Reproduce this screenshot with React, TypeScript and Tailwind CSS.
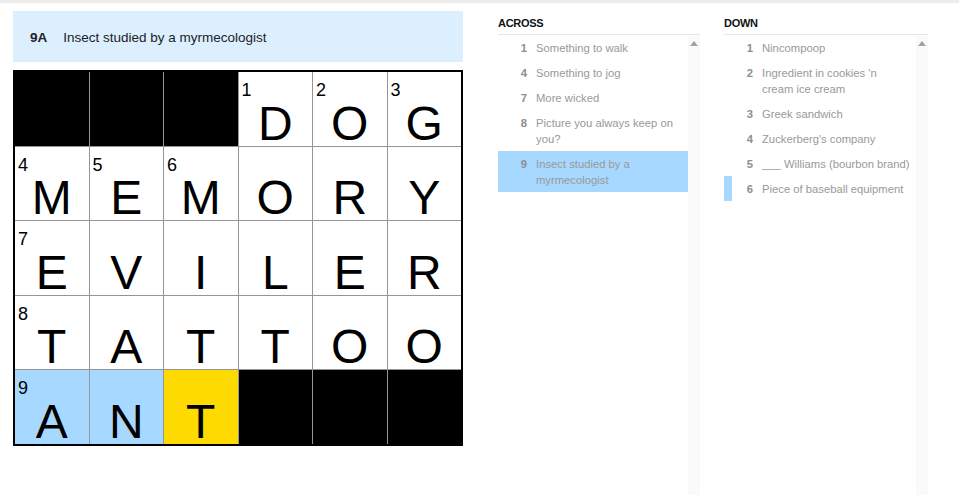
import React from "react";

type Cell = { num?: number; letter?: string; black?: boolean; bg?: string };

const B: Cell = { black: true };
const rows: Cell[][] = [
  [B, B, B, { num: 1, letter: "D" }, { num: 2, letter: "O" }, { num: 3, letter: "G" }],
  [{ num: 4, letter: "M" }, { num: 5, letter: "E" }, { num: 6, letter: "M" }, { letter: "O" }, { letter: "R" }, { letter: "Y" }],
  [{ num: 7, letter: "E" }, { letter: "V" }, { letter: "I" }, { letter: "L" }, { letter: "E" }, { letter: "R" }],
  [{ num: 8, letter: "T" }, { letter: "A" }, { letter: "T" }, { letter: "T" }, { letter: "O" }, { letter: "O" }],
  [
    { num: 9, letter: "A", bg: "blue" },
    { letter: "N", bg: "blue" },
    { letter: "T", bg: "yellow" },
    B,
    B,
    B,
  ],
];

type Clue = { n: number; lines: string[]; active?: boolean; related?: boolean };

const across: Clue[] = [
  { n: 1, lines: ["Something to walk"] },
  { n: 4, lines: ["Something to jog"] },
  { n: 7, lines: ["More wicked"] },
  { n: 8, lines: ["Picture you always keep on", "you?"] },
  { n: 9, lines: ["Insect studied by a", "myrmecologist"], active: true },
];

const down: Clue[] = [
  { n: 1, lines: ["Nincompoop"] },
  { n: 2, lines: ["Ingredient in cookies 'n", "cream ice cream"] },
  { n: 3, lines: ["Greek sandwich"] },
  { n: 4, lines: ["Zuckerberg's company"] },
  { n: 5, lines: ["___ Williams (bourbon brand)"] },
  { n: 6, lines: ["Piece of baseball equipment"], related: true },
];

function GridCell({ c }: { c: Cell }) {
  if (c.black) return <div className="bg-black" />;
  const bg =
    c.bg === "blue" ? "bg-[#a7d8ff]" : c.bg === "yellow" ? "bg-[#ffda00]" : "bg-white";
  return (
    <div className={`relative flex items-end justify-center ${bg}`}>
      {c.num !== undefined && (
        <span className="absolute left-[3px] top-[9px] text-[18px] leading-none text-black">
          {c.num}
        </span>
      )}
      <span className="mb-[-2px] text-[48px] leading-none text-black">{c.letter}</span>
    </div>
  );
}

function ClueList({ title, clues, width }: { title: string; clues: Clue[]; width: string }) {
  return (
    <div className={`flex flex-col ${width}`}>
      <div className="border-b border-[#e6e6e6] pt-[4px] pb-[3px] text-[11px] font-bold leading-[16px] tracking-[-0.3px] text-[#121212]">
        {title}
      </div>
      <div className="flex flex-1">
        <div className="flex flex-1 flex-col">
          {clues.map((c) => (
            <div
              key={c.n}
              className={`flex border-l-[8px] py-[4.5px] leading-[16px] text-[11.25px] ${
                c.active ? "border-[#a7d8ff] bg-[#a7d8ff]" : c.related ? "border-[#a7d8ff]" : "border-transparent"
              }`}
            >
              <span className="w-[21px] shrink-0 text-right font-bold text-[#8e8e8e]">{c.n}</span>
              <span className="ml-[9px] flex flex-col whitespace-nowrap text-[#999999]">
                {c.lines.map((l, i) => (
                  <span key={i}>{l}</span>
                ))}
              </span>
            </div>
          ))}
        </div>
        <div className="flex h-[460px] w-[12px] shrink-0 justify-center bg-[#fafafa] pt-[6px]">
          <svg width="8" height="5" viewBox="0 0 8 5">
            <polygon points="4,0 8,5 0,5" fill="#a3a3a3" />
          </svg>
        </div>
      </div>
    </div>
  );
}

export default function App() {
  return (
    <div className="h-[495px] w-[959px] overflow-hidden bg-white font-['Liberation_Sans',Arial,sans-serif]">
      <div className="h-[3px] bg-[#ececec]" />
      <div className="flex pt-[8px]">
        <div className="ml-[13px] flex w-[450px] flex-col">
          <div className="flex h-[51px] items-center bg-[#dcefff] pl-[17px] pt-[3px] text-[13.5px] text-[#222]">
            <span className="font-bold">9A</span>
            <span className="ml-[16px]">Insect studied by a myrmecologist</span>
          </div>
          <div className="mt-[8px] grid h-[376px] w-[450px] grid-cols-6 grid-rows-5 gap-px border-2 border-black bg-[#959595]">
            {rows.flat().map((c, i) => (
              <GridCell key={i} c={c} />
            ))}
          </div>
        </div>
        <div className="ml-[35px] flex gap-[24px]">
          <ClueList title="ACROSS" clues={across} width="w-[202px]" />
          <ClueList title="DOWN" clues={down} width="w-[204px]" />
        </div>
      </div>
    </div>
  );
}
